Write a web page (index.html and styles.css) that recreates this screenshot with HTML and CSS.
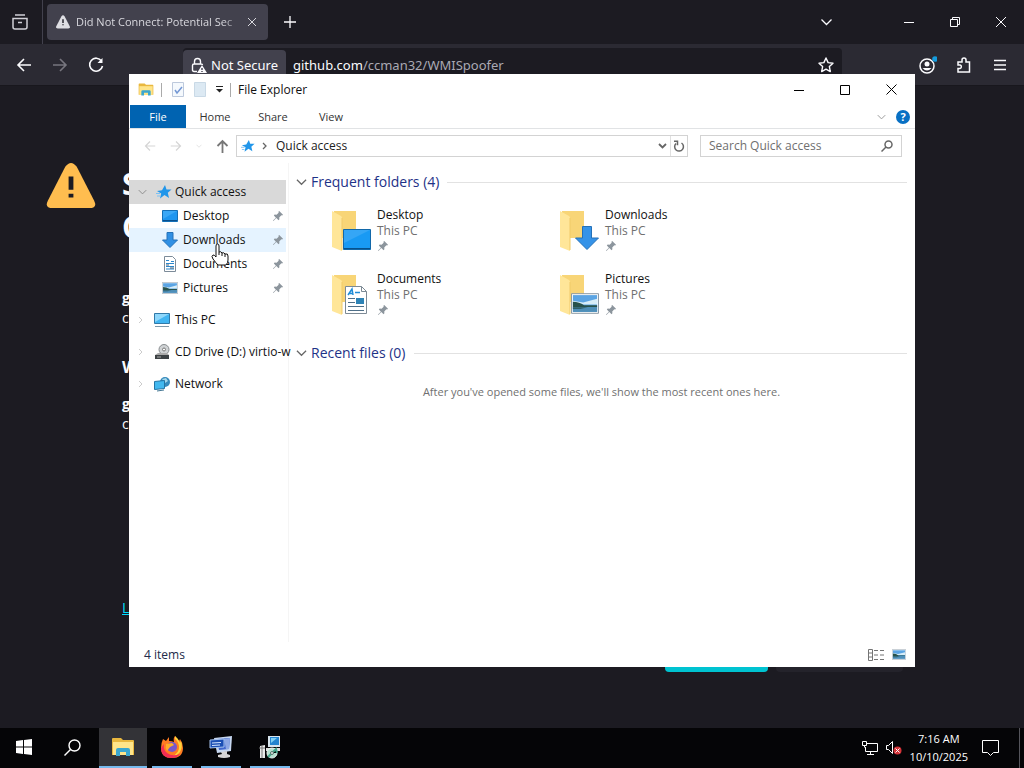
FILE: index.html
```html
<!DOCTYPE html>
<html lang="en">
<head>
    <meta charset="UTF-8">
    <meta name="viewport" content="width=device-width, initial-scale=1.0">
    <title>File Explorer</title>
    <link rel="stylesheet" href="styles.css">
</head>
<body>
    <!-- shared icons -->
    <svg class="defs" aria-hidden="true">
        <symbol id="pin" viewBox="0 0 12 12"><path d="M7.500 0L12 4.500l-1 1-1-.3-2.500 2.500.2 2.300-1 1L4 8.500.5 12 0 11.500 3.500 8 1 5.300l1-1 2.300.2L6.800 2l-.3-1z" fill="#8c959d"/></symbol>
        <symbol id="chevron" viewBox="0 0 12 8"><path d="M1 1.500l5 5 5-5" fill="none" stroke="currentColor" stroke-width="1.300"/></symbol>
        <symbol id="arrow" viewBox="0 0 16 16"><path d="M2 8h13M8 2L2 8l6 6" fill="none" stroke="currentColor" stroke-width="1.600"/></symbol>
        <symbol id="star" viewBox="0 0 16 16"><path d="M9 1l1.500 4.500 5 0-3.700 3.300L13 14 8.500 11 4 14.500l1.200-5L1 7l5-.8z" fill="#2196ea"/><path d="M0 9.500h4M1 12h3" stroke="#7ac1f5"/></symbol>
        <symbol id="desktop" viewBox="0 0 16 16"><path d="M.5 2.500h15v11H.5z" fill="#1e96f0" stroke="#1470b8"/><path d="M1 12.500h14" stroke="#0a4f8c"/><path d="M1 3h14L1 11z" fill="#3aa8f7"/></symbol>
        <symbol id="down" viewBox="0 0 16 16"><path d="M5 .5h6V8h4.500L8 15.500.5 8H5z" fill="#3190e4" stroke="#2471b8"/></symbol>
        <symbol id="down-large" viewBox="0 0 24 24"><path d="M7.500.5h9V12h7L12 23.500.5 12h7z" fill="#3593e8" stroke="#2471b8"/></symbol>
        <symbol id="doc" viewBox="0 0 16 16"><path d="M2.500.5h8l3 3v12h-11z" fill="#fff" stroke="#7c8b99"/><path d="M4 4.500h3M4 7.500h8M4 10.500h8M4 13h8M9 5.500h3" stroke="#2c87cc"/><path d="M4 9h3M8 12h4" stroke="#43627d"/></symbol>
        <symbol id="picture" viewBox="0 0 30 22"><path d="M.5.5h29v21H.5z" fill="#fff" stroke="#80909d"/><path d="M2 2h26v18H2z" fill="#5ba4e3"/><path d="M2 8l11 2 15-4v6H2z" fill="#d7edf8"/><path d="M2 9q7 0 12 4h14v2H2z" fill="#28524b"/><path d="M2 15h26v5H2z" fill="#4f8fb8"/><path d="M2 15h16l-8 2H2z" fill="#2f5f68"/></symbol>
        <symbol id="folder" viewBox="0 0 26 42"><path d="M2 1h22v27H10L2 36z" fill="#f8d577"/><path d="M0 1l9 5q1 1 1 2v33L0 37z" fill="#ffe699"/><path d="M10 8v32" stroke="#f0cb69"/></symbol>
        <symbol id="explorer" viewBox="0 0 24 20"><path d="M1 2q0-1 1-1h8l2 2h10q1 0 1 1v14H1z" fill="#e9b83f"/><path d="M2 5h20v13H2z" fill="#ffe58a"/><path d="M5 19v-6q0-2 2-2h10q2 0 2 2v6h-4v-4H9v4z" fill="#3ba7cf"/></symbol>
        <symbol id="warning" viewBox="0 0 52 50"><path d="M20 5q6-8 12 0l18 35q4 8-5 8H7q-9 0-5-8z" fill="currentColor"/><path d="M26 15v14M26 33v4" stroke="#1c1b22" stroke-width="5"/></symbol>
    </svg>

    <div class="desktop">
        <main class="browser">
            <div class="tabstrip">
                <button class="tab-view" aria-label="Tab overview"><svg width="16" height="16" viewBox="0 0 16 16" fill="none" stroke="currentColor" stroke-width="1.500"><path d="M3 1h10M1 4.500h14V13q0 2-2 2H3q-2 0-2-2zM6 8.500h4"/></svg></button>
                <div class="tab">
                    <svg class="tab-icon" width="16" height="14"><use href="#warning"/></svg>
                    <span class="tab-title">Did Not Connect: Potential Sec</span>
                    <button aria-label="Close tab"><svg width="8" height="8" viewBox="0 0 8 8" stroke="currentColor"><path d="M0 0l8 8M8 0L0 8"/></svg></button>
                </div>
                <button class="new-tab" aria-label="New tab"><svg width="12" height="12" viewBox="0 0 12 12" stroke="currentColor" stroke-width="1.300"><path d="M6 0v12M0 6h12"/></svg></button>
                <button class="tab-list" aria-label="List all tabs"><svg width="13" height="8"><use href="#chevron"/></svg></button>
                <div class="browser-controls">
                    <button aria-label="Minimize"><svg width="10" height="10" stroke="currentColor"><path d="M0 5.500h10"/></svg></button>
                    <button aria-label="Restore"><svg width="10" height="10" viewBox="0 0 10 10" fill="none" stroke="currentColor"><path d="M.5 2.500h7v7h-7zM2.500 2.500v-2h7v7h-2"/></svg></button>
                    <button aria-label="Close"><svg width="10" height="10" viewBox="0 0 10 10" stroke="currentColor"><path d="M0 0l10 10M10 0L0 10"/></svg></button>
                </div>
            </div>
            <div class="toolbar">
                <button aria-label="Back"><svg width="16" height="16"><use href="#arrow"/></svg></button>
                <button class="faded" aria-label="Forward"><svg class="flip" width="16" height="16"><use href="#arrow"/></svg></button>
                <button aria-label="Reload"><svg width="16" height="16" viewBox="0 0 16 16" fill="none" stroke="currentColor" stroke-width="1.600"><path d="M13.500 4A6.500 6.500 0 1 0 14.500 9"/><path d="M14.500 1v5h-5z" fill="currentColor" stroke="none"/></svg></button>
                <div class="urlbar">
                    <button class="security"><svg width="16" height="16" viewBox="0 0 16 16" fill="none" stroke="currentColor" stroke-width="1.400"><path d="M3.500 7V4.500a3 3 0 0 1 6 0V7M6 14.500H3q-1.500 0-1.500-1.500V8.500Q1.500 7 3 7h7q1.500 0 1.500 1"/><path d="M11 8l5 8H6z" fill="currentColor" stroke="none"/><path d="M11 11v2M11 14v1" stroke="#42414d"/></svg>Not Secure</button>
                    <span class="url"><b>github.com</b>/ccman32/WMISpoofer</span>
                    <button class="bookmark" aria-label="Bookmark"><svg width="16" height="16" viewBox="0 0 16 16" fill="none" stroke="currentColor" stroke-width="1.400" stroke-linejoin="round"><path d="M8 1l2.100 4.600 4.900.6-3.600 3.400.9 5L8 12.200l-4.300 2.400.9-5L1 6.200l4.900-.6z"/></svg></button>
                </div>
                <div class="browser-tools">
                    <button aria-label="Account"><svg width="18" height="18" viewBox="0 0 18 18"><circle cx="8" cy="10" r="7" fill="none" stroke="currentColor" stroke-width="1.500"/><circle cx="8" cy="8" r="2.500" fill="currentColor"/><path d="M3.500 12h9q-4.500 5-9 0" fill="currentColor"/><circle cx="16" cy="3" r="2.800" fill="#159bdc"/></svg></button>
                    <button aria-label="Extensions"><svg width="16" height="16" viewBox="0 0 16 16" fill="none" stroke="currentColor" stroke-width="1.500"><path d="M2 5h4V3a2 2 0 0 1 4 0v2h3.500v10H2v-3.500h2a1.800 1.800 0 0 0 0-3.500H2z"/></svg></button>
                    <button aria-label="Menu"><svg width="12" height="12" viewBox="0 0 12 12" stroke="currentColor" stroke-width="1.300"><path d="M0 1.500h12M0 6h12M0 10.500h12"/></svg></button>
                </div>
            </div>
            <section class="error-page">
                <svg class="alert" width="50" height="48"><use href="#warning"/></svg>
                <div class="error-text">
                    <h1>S<br>C</h1>
                    <p class="error-detail"><b>g</b><br>c</p>
                    <h2>W</h2>
                    <p><b>g</b><br>c</p>
                    <a href="#">L</a>
                    <div class="error-actions">
                        <button class="primary" aria-label="Go back"></button>
                        <button class="secondary" aria-label="Advanced"></button>
                    </div>
                </div>
            </section>
        </main>

        <section class="window">
            <header class="titlebar">
                <svg width="16" height="15"><use href="#explorer"/></svg>
                <i class="rule"></i>
                <button aria-label="Properties"><svg width="12" height="15" viewBox="0 0 12 15"><path d="M.5.5h11v14H.5z" fill="#f5f9fd" stroke="#bdc9dc"/><path d="M3 8l2 3 5-6" fill="none" stroke="#7397d4" stroke-width="1.500"/></svg></button>
                <button aria-label="New folder"><svg width="12" height="15" viewBox="0 0 12 15"><path d="M.5.5h11v14H.5z" fill="#dce9f3" stroke="#c9d9e6"/></svg></button>
                <button aria-label="Customize toolbar"><svg width="7" height="7" viewBox="0 0 7 7"><path d="M0 .5h7" stroke="#222"/><path d="M0 3h7L3.500 6.500z" fill="#222"/></svg></button>
                <i class="rule"></i>
                <span class="window-title">File Explorer</span>
                <div class="window-controls">
                    <button aria-label="Minimize"><svg width="10" height="10" stroke="#000"><path d="M0 5.500h10"/></svg></button>
                    <button aria-label="Maximize"><svg width="10" height="10" fill="none" stroke="#000"><path d="M.5.5h9v9h-9z"/></svg></button>
                    <button aria-label="Close"><svg width="11" height="11" stroke="#000"><path d="M.5.5l10 10M10.500.5l-10 10"/></svg></button>
                </div>
            </header>

            <nav class="ribbon">
                <button class="file">File</button>
                <button>Home</button>
                <button>Share</button>
                <button>View</button>
                <div class="ribbon-end">
                    <button aria-label="Expand the ribbon"><svg width="9" height="6"><use href="#chevron"/></svg></button>
                    <button class="help" aria-label="Help">?</button>
                </div>
            </nav>

            <div class="navigation">
                <div class="history">
                    <button class="off" aria-label="Back"><svg width="12" height="12"><use href="#arrow"/></svg></button>
                    <button class="off" aria-label="Forward"><svg class="flip" width="12" height="12"><use href="#arrow"/></svg></button>
                    <button class="off recent" aria-label="Recent locations"><svg width="6" height="4"><use href="#chevron"/></svg></button>
                    <button aria-label="Up"><svg width="13" height="14" viewBox="0 0 13 14" fill="none" stroke="currentColor" stroke-width="1.800"><path d="M6.500 14V2M1.500 7l5-5 5 5"/></svg></button>
                </div>
                <div class="address">
                    <svg width="14" height="14"><use href="#star"/></svg>
                    <svg class="crumb" width="5" height="8" viewBox="0 0 5 8"><path d="M1 1l3 3-3 3" fill="none" stroke="#666" stroke-width="1.300"/></svg>
                    <span>Quick access</span>
                    <button class="drop" aria-label="Previous locations"><svg width="9" height="6" viewBox="0 0 9 6"><path d="M1 1l3.500 3.500L8 1" fill="none" stroke="currentColor" stroke-width="1.800"/></svg></button>
                    <button class="refresh" aria-label="Refresh"><svg width="12" height="12" viewBox="0 0 12 12" fill="none" stroke="currentColor" stroke-width="1.500"><path d="M8.500 3A4.400 4.400 0 1 1 3 3.500M1 1.200h3.500v4"/></svg></button>
                </div>
                <div class="search">
                    <input type="search" aria-label="Search Quick access" placeholder="Search Quick access">
                    <svg width="12" height="12" viewBox="0 0 12 12" fill="none" stroke="#666" stroke-width="1.500"><circle cx="7.500" cy="4.500" r="3.500"/><path d="M5 7L.5 11.500"/></svg>
                </div>
            </div>

            <div class="body">
                <nav class="sidebar">
                    <a class="selected" href="#"><svg class="toggle open" width="9" height="6"><use href="#chevron"/></svg><svg width="16" height="16"><use href="#star"/></svg>Quick access</a>
                    <a class="child" href="#"><svg width="16" height="16"><use href="#desktop"/></svg>Desktop<svg class="pin" width="10" height="10"><use href="#pin"/></svg></a>
                    <a class="child hovered" href="#"><svg width="16" height="16"><use href="#down"/></svg>Downloads<svg class="pin" width="10" height="10"><use href="#pin"/></svg></a>
                    <a class="child" href="#"><svg width="16" height="16"><use href="#doc"/></svg>Documents<svg class="pin" width="10" height="10"><use href="#pin"/></svg></a>
                    <a class="child" href="#"><svg width="16" height="12"><use href="#picture"/></svg>Pictures<svg class="pin" width="10" height="10"><use href="#pin"/></svg></a>
                    <a class="root" href="#"><svg class="toggle" width="5" height="8" viewBox="0 0 5 8"><path d="M1 1l3 3-3 3" fill="none" stroke="currentColor"/></svg><svg width="16" height="16" viewBox="0 0 16 16"><path d="M.5 1.500h15v10H.5z" fill="#41b5f2" stroke="#3179a8"/><path d="M1 2h14L1 10z" fill="#8ed7fb"/><path d="M1 14.500h14" stroke="#7e98a9"/></svg>This PC</a>
                    <a class="root" href="#"><svg class="toggle" width="5" height="8" viewBox="0 0 5 8"><path d="M1 1l3 3-3 3" fill="none" stroke="currentColor"/></svg><svg width="16" height="16" viewBox="0 0 16 16"><circle cx="10" cy="5.500" r="5" fill="#d0d3d5" stroke="#898d90"/><circle cx="10" cy="5.500" r="1.500" fill="#fff" stroke="#777"/><path d="M4 9h9l2 2H1z" fill="#aaa"/><path d="M1 11h14v4H1z" fill="#3d4245"/><path d="M3 13h4" stroke="#aaa"/></svg>CD Drive (D:) virtio-w</a>
                    <a class="root" href="#"><svg class="toggle" width="5" height="8" viewBox="0 0 5 8"><path d="M1 1l3 3-3 3" fill="none" stroke="currentColor"/></svg><svg width="16" height="16" viewBox="0 0 16 16"><circle cx="11" cy="6" r="5" fill="#368abc"/><path d="M8 3l4-1 2 3-3 2" fill="#a5d8eb"/><path d="M.5 5.500l10-1v8l-10 1z" fill="#42b8ef" stroke="#2475a5"/><path d="M3 15l7-1" stroke="#457894"/></svg>Network</a>
                </nav>

                <div class="content">
                    <h2><svg width="11" height="8"><use href="#chevron"/></svg>Frequent folders (4)</h2>
                    <div class="folders">
                        <a class="folder" href="#">
                            <span class="folder-icon"><svg width="26" height="42"><use href="#folder"/></svg><svg class="badge" width="28" height="21" viewBox="0 0 28 21"><path d="M.5.5h27v20H.5z" fill="#199af4" stroke="#1268a9"/><path d="M1 19.500h26" stroke="#07518c"/><path d="M1 1h26L1 14z" fill="#35a6f6"/></svg></span>
                            <span class="folder-text">Desktop<small>This PC</small><svg width="10" height="10"><use href="#pin"/></svg></span>
                        </a>
                        <a class="folder" href="#">
                            <span class="folder-icon"><svg width="26" height="42"><use href="#folder"/></svg><svg class="badge" width="24" height="24"><use href="#down-large"/></svg></span>
                            <span class="folder-text">Downloads<small>This PC</small><svg width="10" height="10"><use href="#pin"/></svg></span>
                        </a>
                        <a class="folder" href="#">
                            <span class="folder-icon"><svg width="26" height="42"><use href="#folder"/></svg><svg class="badge doc-badge" width="22" height="28" viewBox="0 0 22 28"><path d="M.5.500h16l5 5v22H.5z" fill="#fff" stroke="#7d8a95"/><path d="M16.500.5v5h5" fill="none" stroke="#7d8a95"/><path d="M3 9l4-6 1 6M4 7.500h4M10 6.500h5" fill="none" stroke="#208dd7" stroke-width="1.500"/><path d="M3 12.500h7M3 16.500h7M3 20.500h16M3 24.500h16" stroke="#4f6f88"/><path d="M11 12h8v6h-8z" fill="#2e83b6"/></svg></span>
                            <span class="folder-text">Documents<small>This PC</small><svg width="10" height="10"><use href="#pin"/></svg></span>
                        </a>
                        <a class="folder" href="#">
                            <span class="folder-icon"><svg width="26" height="42"><use href="#folder"/></svg><svg class="badge" width="28" height="21"><use href="#picture"/></svg></span>
                            <span class="folder-text">Pictures<small>This PC</small><svg width="10" height="10"><use href="#pin"/></svg></span>
                        </a>
                    </div>
                    <h2><svg width="11" height="8"><use href="#chevron"/></svg>Recent files (0)</h2>
                    <p class="empty">After you've opened some files, we'll show the most recent ones here.</p>
                </div>
            </div>

            <footer class="status">
                <span>4 items</span>
                <button aria-label="Details view"><svg width="16" height="12" viewBox="0 0 16 12" fill="none" stroke="#747474"><path d="M.5.500h4v11h-4zM.5 4h4M.5 8h4M6 1.500h4M12 1.500h4M6 6h4M12 6h4M6 10.500h4M12 10.500h4"/></svg></button>
                <button aria-label="Large icons view"><svg width="14" height="11"><use href="#picture"/></svg></button>
            </footer>
        </section>

        <footer class="taskbar">
            <button aria-label="Start"><svg width="16" height="16" viewBox="0 0 16 16" fill="#fff"><path d="M0 2l7-1v6.500H0zM8 1l8-1v7.500H8zM0 8.500h7V15l-7-1zM8 8.500h8V16l-8-1z"/></svg></button>
            <button aria-label="Search"><svg width="17" height="17" viewBox="0 0 17 17" fill="none" stroke="#fff" stroke-width="1.400"><circle cx="10.500" cy="6.500" r="5.500"/><path d="M6.500 10.500L.5 16.500"/></svg></button>
            <button class="active" aria-label="File Explorer"><svg width="24" height="20"><use href="#explorer"/></svg></button>
            <button class="running" aria-label="Firefox"><svg width="24" height="24" viewBox="0 0 24 24"><path d="M3 4l3 2 3-4v4q3 0 5 1-1-4 1-6l4 5 1-2q3 4 3 9 0 10-11 10T1 13q0-5 2-9z" fill="#ff7c22"/><path d="M15 1q4 3 5 7l1-2q2 6-1 11-4 5-9 5 9-4 8-11-1-5-4-7z" fill="#ffd43b"/><path d="M1 13q0 10 11 10 5 0 8-4-8 3-13-1-4-3-3-9z" fill="#f22d55"/><circle cx="12" cy="12" r="5" fill="#7757cb"/><path d="M6 9l6-1 2 2-4 2-3 4q-2-3-1-7z" fill="#ffad28"/></svg></button>
            <button class="running" aria-label="System utility"><svg width="24" height="24" viewBox="0 0 24 24"><path d="M5 3l18-2-1 15-14 2z" fill="#c6d7f0"/><path d="M8 4l13-1-1 11-10 1z" fill="#4168ce"/><path d="M15 4l6-1-1 11-3 .3z" fill="#8da8e4"/><path d="M1 5l14-1v8L1 13z" fill="#1b4fb4" stroke="#a7c3ed"/><path d="M3 8l9-.5M3 10.500l8-.5" stroke="#d6e6ff"/><path d="M12 17l6-1v3l3 1v2q-6 2-12 0v-2l4-1z" fill="#d6d5d5"/></svg></button>
            <button class="running" aria-label="Installer"><svg width="24" height="24" viewBox="0 0 24 24"><path d="M10 1h12v11H10z" fill="#d8e5ed"/><path d="M12 2h9v8h-9z" fill="#2385d0"/><path d="M13 3h6l-6 5z" fill="#7fd0f4"/><path d="M8 13h14v3H8z" fill="#dedede"/><path d="M2 11l5-1v13H2z" fill="#e9e9e9"/><path d="M4 11v12M1 13h6" stroke="#777"/><circle cx="14" cy="18" r="5" fill="#b7e1d0" stroke="#e9f3ef"/><path d="M14 18l4-4 1 4M14 18l-4 4" stroke="#44a58a" stroke-width="2"/><circle cx="14" cy="18" r="1.500" fill="#eee" stroke="#55756b"/></svg></button>
            <div class="tray">
                <svg width="16" height="14" viewBox="0 0 16 14" fill="none" stroke="#fff"><path d="M5 2.500h10.500v8H3.500V6M8.500 10.500v3M5 13.500h7M.5.500h4v4h-4zM2.500 4.500v2"/></svg>
                <svg width="16" height="14" viewBox="0 0 16 14"><path d="M.5 4.500h2l4-4v12l-4-4h-2z" fill="none" stroke="#fff"/><circle cx="11.500" cy="9.500" r="4" fill="#d63439"/><path d="M9.500 7.500l4 4M13.500 7.500l-4 4" stroke="#fff"/></svg>
                <time datetime="2025-10-10T07:16">7:16 AM<br>10/10/2025</time>
                <button aria-label="Notifications"><svg width="17" height="16" viewBox="0 0 17 16" fill="none" stroke="#fff"><path d="M.5.500h16v12h-5l-3 3-3-3h-5z"/></svg></button>
            </div>
        </footer>

        <svg class="cursor" width="18" height="23" viewBox="0 0 18 23"><path d="M5 13V3q0-2 1.500-2T8 3v6q2-1 3 1 2-1 3 1 3-1 3 2v4q0 3-2 5H7q-2-2-5-6-2-3 0-4 1-.5 3 2z" fill="#fff" stroke="#111"/><path d="M8 9v3M11 10v3M14 11v3" stroke="#111"/></svg>
    </div>
</body>
</html>
```

FILE: styles.css
```css
* { box-sizing: border-box; }
body { margin: 0; font-family: "Open Sans", "Noto Sans", sans-serif; font-size: 12px; line-height: 16px; color: #111; }
button { display: flex; align-items: center; justify-content: center; padding: 0; border: 0; background: none; color: inherit; font: inherit; }
a { color: inherit; text-decoration: none; }
svg { display: block; flex: none; }
h1, h2, p { margin: 0; }
.defs { position: absolute; width: 0; height: 0; }
.flip { transform: scaleX(-1); }
.desktop { position: relative; display: flex; flex-direction: column; height: 100vh; overflow: hidden; background: #1c1b22; }

/* browser */
.browser { flex: 1; min-height: 0; overflow: hidden; color: #fbfbfe; }
.tabstrip { display: flex; align-items: center; height: 44px; background: #1c1b22; }
.tab-view { width: 43px; height: 44px; padding-right: 3px; border-right: 1px solid #42414d; color: #d0d0d6; }
.tab { display: flex; align-items: center; gap: 5px; width: 221px; height: 36px; margin-left: 4px; padding: 0 12px 0 8px; border-radius: 4px; background: #42414d; color: #d8d8de; }
.tab-icon { color: #dedee3; }
.tab-title { flex: 1; overflow: hidden; white-space: nowrap; font-size: 11px; mask-image: linear-gradient(to right, #000 88%, transparent); }
.new-tab { width: 44px; height: 36px; }
.tab-list { width: 32px; height: 32px; margin-left: auto; }
.browser-controls { display: flex; margin-left: 44px; }
.browser-controls button { width: 46px; height: 32px; }
.toolbar { display: flex; align-items: center; height: 42px; padding: 0 6px; background: #2b2a33; border-bottom: 1px solid #18171d; }
.toolbar > button { width: 36px; height: 36px; }
.faded { color: #77767f; }
.urlbar { display: flex; align-items: center; flex: 1; height: 34px; margin-left: 69px; border-radius: 4px; background: #1c1b22; font-family: "Noto Sans", sans-serif; font-size: 13px; line-height: 20px; }
.security { gap: 4px; height: 30px; padding: 0 8px; border-radius: 4px 4px 0 0; background: #42414d; }
.url { flex: 1; margin-left: 7px; color: #aaa9b3; }
.url b { font-weight: normal; color: #fbfbfe; }
.bookmark { width: 32px; }
.browser-tools { display: flex; margin-left: 68px; }
.browser-tools button { width: 36px; height: 32px; }
.error-page { display: flex; align-items: flex-start; gap: 26px; padding: 76px 120px 0 46px; }
.alert { color: #ffbd4f; }
.error-text { flex: 1; font-size: 14px; line-height: 20px; }
.error-text h1 { font-size: 30px; line-height: 43px; }
.error-detail { padding: 40px 0 28px; }
.error-text h2 { padding-bottom: 16px; font-size: 16px; line-height: 22px; }
.error-text a { display: block; padding: 164px 0 22px; color: #00ddff; text-decoration: underline; }
.error-actions { display: flex; justify-content: flex-end; gap: 8px; padding-right: 1px; }
.error-actions button { width: 103px; height: 32px; border-radius: 4px; background: #00c3d1; }
.error-actions .secondary { width: 127px; background: #24232b; }

/* explorer window */
.window { position: absolute; top: 74px; right: 109px; bottom: 101px; left: 129px; display: flex; flex-direction: column; background: #fff; }
.titlebar { display: flex; align-items: center; height: 31px; padding-left: 9px; }
.titlebar > button { margin-right: 10px; }
.titlebar > button + button + button { margin: 0; }
.rule { width: 1px; height: 14px; margin: 0 10px 0 7px; background: #aaa; }
.rule + .window-title { margin-left: -3px; }
.window-controls { display: flex; margin-left: auto; margin-right: 1px; }
.window-controls button { width: 46px; height: 30px; }
.ribbon { display: flex; height: 24px; padding-left: 1px; border-bottom: 1px solid #e1e3e5; font-size: 11px; color: #333; }
.ribbon > button { width: 58px; }
.ribbon .file { width: 56px; background: #0063b1; color: #fff; }
.ribbon-end { display: flex; align-items: center; gap: 10px; margin-left: auto; padding-right: 5px; color: #999; }
.help { width: 14px; height: 14px; border-radius: 7px; background: #0870c4; color: #fff; font-weight: bold; }
.navigation { display: flex; align-items: center; height: 34px; padding: 0 13px 0 15px; }
.history { display: flex; align-items: center; justify-content: space-between; width: 85px; margin-right: 7px; color: #777; }
.history .off { color: #d5d5d5; }
.address, .search { display: flex; align-items: center; height: 22px; border: 1px solid #d3d3d3; }
.address { flex: 1; padding-left: 4px; color: #222; }
.crumb { margin: 0 9px 0 7px; }
.drop { width: 16px; height: 20px; margin-left: auto; color: #666; }
.refresh { width: 17px; height: 20px; border-left: 1px solid #e0e0e0; color: #666; }
.search { width: 202px; margin-left: 12px; padding: 0 8px; }
.search input { flex: 1; min-width: 0; padding: 0; border: 0; outline: 0; background: none; font: inherit; }
.search input::placeholder { color: #707070; }
.body { display: flex; flex: 1; min-height: 0; }
.sidebar { width: 160px; padding: 17px 2px 0 0; border-right: 1px solid #f5f5f5; }
.sidebar a { display: flex; align-items: center; gap: 4px; height: 24px; padding-left: 25px; white-space: nowrap; }
.sidebar a:has(.toggle) { padding-left: 9px; }
.sidebar .child { gap: 5px; padding-left: 33px; }
.sidebar .root { gap: 5px; margin-top: 8px; }
.toggle { margin-right: 6px; color: #ccc; }
.sidebar .selected { gap: 3px; padding-left: 7px; background: #d9d9d9; }
.toggle.open { color: #8d8d8d; }
.sidebar .hovered { background: #e5f3ff; }
.pin { margin-left: auto; margin-right: 3px; }
.content { flex: 1; min-width: 0; padding: 8px 8px 0 7px; }
.content h2 { display: flex; align-items: center; gap: 4px; font-size: 14px; font-weight: normal; line-height: 22px; color: #1e3287; }
.content h2 svg { color: #666; }
.content h2::after { content: ""; flex: 1; height: 1px; margin-left: 4px; background: #e2e2e2; }
.folders { display: grid; grid-template-columns: 228px 228px; padding: 14px 0 7px 36px; }
.folder { display: flex; gap: 6px; height: 64px; }
.folder-icon { position: relative; width: 39px; height: 48px; padding-top: 3px; }
.badge { position: absolute; right: 0; bottom: 5px; }
.doc-badge { right: 4px; }
.folder-text small { display: block; font-size: 12px; color: #707070; }
.folder-text svg { margin: 2px 0 0 1px; }
.empty { padding-top: 20px; font-size: 11px; text-align: center; color: #707070; }
.status { display: flex; align-items: center; gap: 8px; height: 25px; padding: 0 9px 0 15px; color: #222b4a; }
.status span { flex: 1; }

/* taskbar */
.taskbar { display: flex; gap: 9px; height: 40px; background: #050507; color: #fff; }
.taskbar > button { width: 40px; border-bottom: 2px solid transparent; }
.taskbar > button:first-child { width: 48px; }
.taskbar > button:nth-child(2) { width: 48px; margin-left: -9px; }
.taskbar .active { width: 48px; margin: 0 -4px 0 -6px; border-color: #76b9ed; background: #333337; }
.taskbar .running { border-color: #76b9ed; }
.tray { display: flex; align-items: center; gap: 8px; margin-left: auto; margin-right: 4px; padding-right: 20px; border-right: 1px solid #55555b; }
.tray time { margin-right: 6px; font-size: 11px; line-height: 18px; text-align: center; }
.cursor { position: absolute; top: 243px; left: 211px; }
```
